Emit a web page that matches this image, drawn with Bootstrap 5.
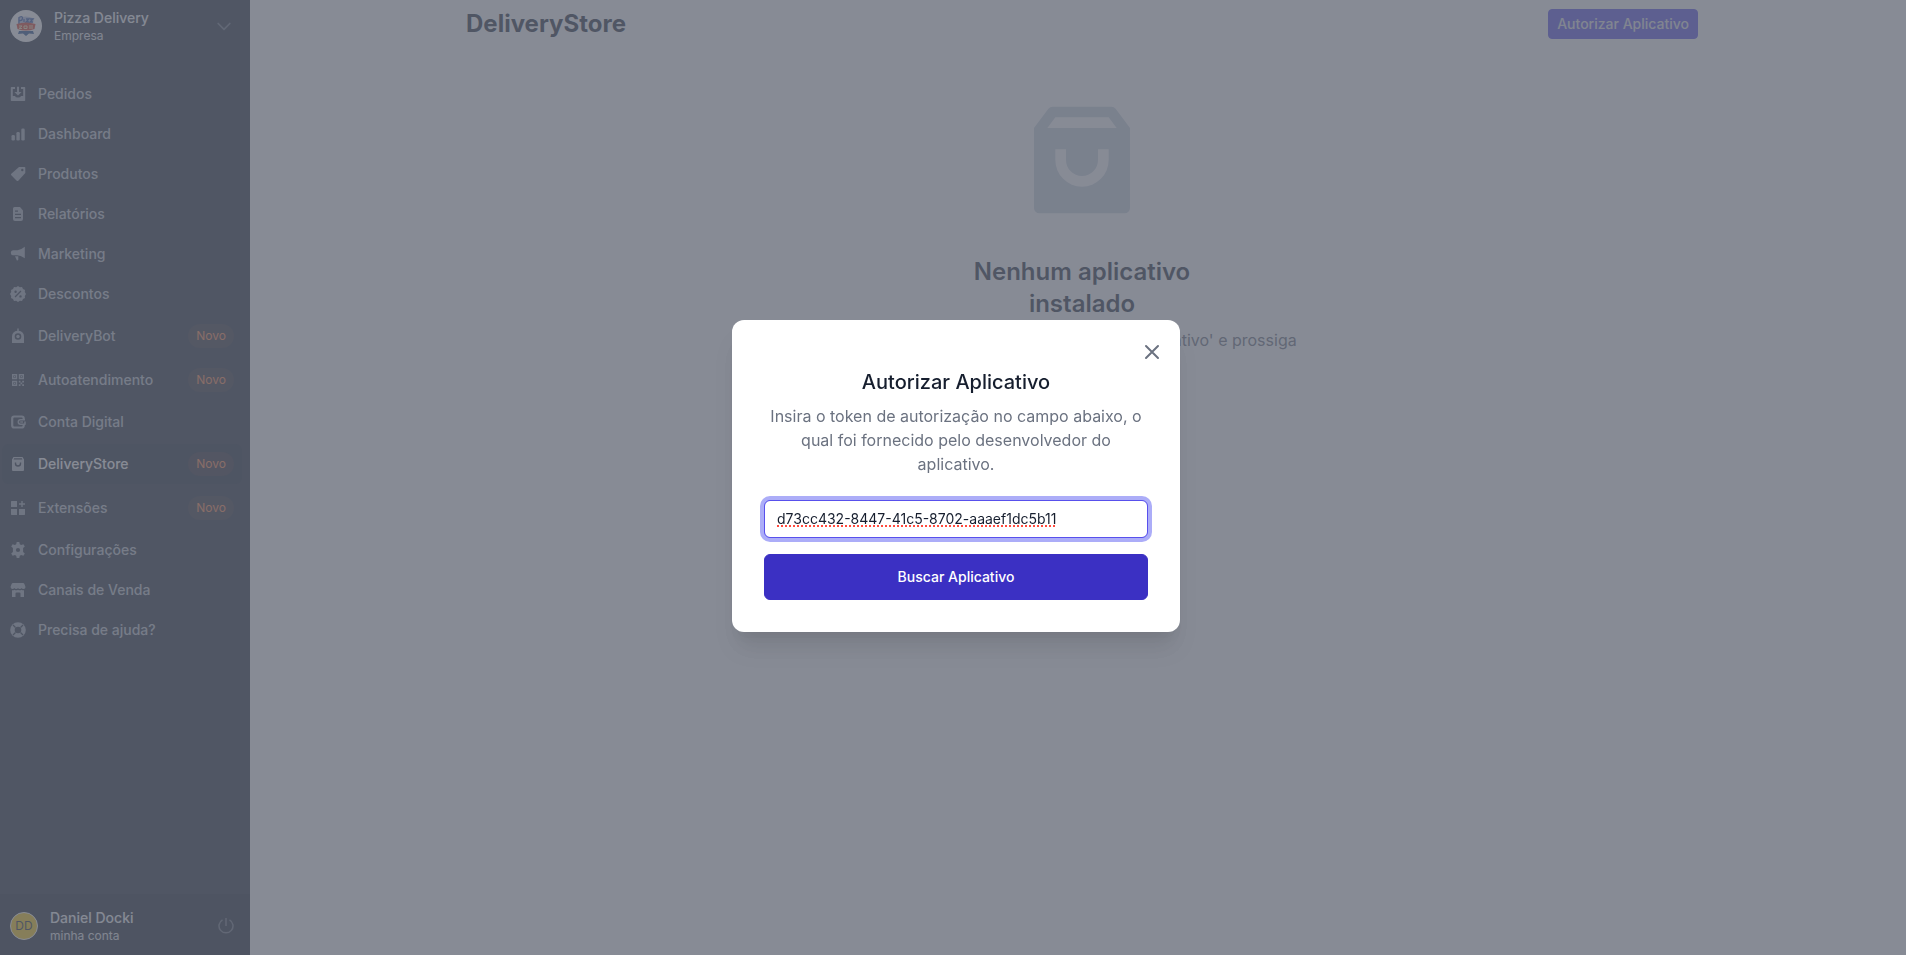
<!DOCTYPE html>
<html lang="pt-BR">
<head>
<meta charset="utf-8">
<meta name="viewport" content="width=device-width, initial-scale=1">
<title>DeliveryStore</title>
<link href="https://cdn.jsdelivr.net/npm/bootstrap@5.3.0/dist/css/bootstrap.min.css" rel="stylesheet">
<style>
  body { font-family: Inter, "Liberation Sans", sans-serif; font-size: 14px; line-height: 20px; color: #252f3f; background: #fff; }
  .sidebar { width: 250px; background: #252f3f; }
  .side-head { padding: 8px 16px 0 10px; margin-bottom: 32px; }
  .brand-logo { width: 32px; height: 32px; }
  .side-name { font-weight: 500; line-height: 20px; color: #f4f5f7; }
  .side-sub { font-size: 12px; line-height: 16px; color: #e5e7eb; }
  .side-nav { padding: 0 8px 0 2px; gap: 4px; }
  .side-nav .nav-link { display: flex; align-items: center; gap: 12px; padding: 8px; border-radius: 6px; color: #bec3cc; font-weight: 500; line-height: 20px; }
  .side-nav .nav-link svg { width: 16px; height: 16px; color: #9fa6b2; flex: none; }
  .side-nav .nav-link.active { background: #1f2838; color: #fff; }
  .side-nav .nav-link.active svg { color: #b4bac4; }
  .tag-new { margin-left: auto; padding: 4px 8px; border-radius: 12px; font-size: 12px; line-height: 16px; font-weight: 400; color: #ff8a4c; background: rgba(255, 120, 60, .08); }
  .side-foot { padding: 14px 16px 11px 10px; background: #1f2737; }
  .user-dot { width: 28px; height: 28px; border: 1px solid #fff; background: #faca15; font-size: 12px; color: #252f3f; }
  .icon-btn { border: 0; background: none; padding: 0; line-height: 0; color: #6b7280; }
  .page-wrap { max-width: 1288px; padding: 8px 24px 8px 32px; }
  .page-title { font-size: 24px; line-height: 32px; font-weight: 700; }
  .btn-authorize { --bs-btn-color: #e5e7eb; --bs-btn-bg: #5850ec; --bs-btn-border-color: #5850ec; font-size: 14px; line-height: 20px; font-weight: 500; padding: 4px 8px; border-radius: 4px; }
  .empty-box { padding-top: 56px; }
  .empty-box svg { color: #cbd5e0; }
  .empty-box h2 { max-width: 256px; font-size: 24px; line-height: 32px; font-weight: 600; }
  .empty-box p { max-width: 448px; font-size: 16px; line-height: 24px; color: #6b7280; }
  .modal-backdrop.dim { --bs-backdrop-bg: #5f6471; --bs-backdrop-opacity: .75; opacity: .75; }
  .modal.auth { padding: 0 0 4px 6px; --bs-modal-width: 448px; }
  .modal.auth .modal-content { border: 0; border-radius: 12px; padding: 48px 32px 32px; box-shadow: 0 20px 25px -5px rgba(0,0,0,.1), 0 10px 10px -5px rgba(0,0,0,.04); }
  .icon-btn.close-x { position: absolute; top: 20px; right: 16px; }
  .modal.auth h1 { font-size: 20px; line-height: 28px; font-weight: 500; color: #161e2e; }
  .modal.auth p { font-size: 16px; line-height: 24px; color: #6b7280; }
  .token-input.form-control { font-size: 14px; line-height: 20px; padding: 8px 12px; border-radius: 6px; color: #161e2e; border-color: #5850ec; box-shadow: 0 0 0 4px #acadf8; text-decoration: underline dotted #ff4b3e 2px; text-underline-offset: 2px; text-decoration-skip-ink: none; }
  .btn-search { --bs-btn-color: #fff; --bs-btn-bg: #3b30c3; --bs-btn-border-color: #3b30c3; font-size: 14px; line-height: 20px; font-weight: 500; padding: 12px; border-radius: 6px; }
</style>
<script src="https://cdn.jsdelivr.net/npm/bootstrap@5.3.0/dist/js/bootstrap.bundle.min.js"></script>
</head>
<body>
<div class="d-flex min-vh-100">
  <aside class="sidebar d-flex flex-column flex-shrink-0">
    <div class="side-head d-flex align-items-center">
      <svg class="brand-logo flex-shrink-0" viewBox="0 0 32 32" aria-hidden="true">
        <circle cx="16" cy="16" r="16" fill="#fff"/>
        <path d="M8 8.500q7-4 16 0l-1 5H8z" fill="#b8c4e8"/>
        <path d="M9 14V7.500q4-2 3.500 1-.5 2.500-3 2M14 12V9m2 0h3l-3 3h3m1-3h3l-3 3h3" fill="none" stroke="#3458a8" stroke-width="1.300"/>
        <path d="M6.500 14q9.500-3 19 0l-1 5q-8.500 3-17 0z" fill="#e0402e"/>
        <path d="M9 16h3l-3 2.500h3m2-2.500h3v2.500h-3zm5 0h4m-4 2h4" fill="none" stroke="#fce6b0" stroke-width="1"/>
        <path d="M9 21h14l1 3-5-.5-3 2.500-3-2.500-5 .5z" fill="#27518f"/>
      </svg>
      <div class="ms-2 ps-1">
        <div class="side-name">Pizza Delivery</div>
        <div class="side-sub">Empresa</div>
      </div>
      <button class="icon-btn ms-auto" type="button" aria-label="Trocar empresa">
        <svg width="20" height="20" viewBox="0 0 24 24" fill="none" stroke="currentColor" stroke-width="2" stroke-linecap="round" stroke-linejoin="round"><path d="M5 9l7 7 7-7"/></svg>
      </button>
    </div>

    <nav class="side-nav nav flex-column">
      <a class="nav-link" href="#"><svg viewBox="0 0 16 16" fill="currentColor"><path d="M1.500 1H5v2H2.800v7H5q.4 1.600 3 1.600T11 10h2.200V3H11V1h3.500q.7 0 .7.700v12.600q0 .7-.7.700h-13q-.7 0-.7-.7V1.700q0-.7.700-.7zM7 .8h2V6h2.600L8 9.600 4.400 6H7z"/></svg>Pedidos</a>
      <a class="nav-link" href="#"><svg viewBox="0 0 16 16" fill="currentColor"><rect x="1.500" y="9" width="3.400" height="5.500" rx="1.300"/><rect x="6.400" y="6" width="3.400" height="8.500" rx="1.300"/><rect x="11.300" y="2.500" width="3.400" height="12" rx="1.300"/></svg>Dashboard</a>
      <a class="nav-link" href="#"><svg viewBox="0 0 16 16" fill="currentColor"><path fill-rule="evenodd" d="M9 1h5.500q.8 0 .8.800V7L8.300 14.700q-.8.800-1.600 0L1.300 9.300q-.8-.8 0-1.600zm3.300 1.800a1.200 1.200 0 1 0 0 2.400 1.200 1.200 0 0 0 0-2.400z"/></svg>Produtos</a>
      <a class="nav-link" href="#"><svg viewBox="0 0 16 16" fill="currentColor"><path fill-rule="evenodd" d="M4.500 1H10l3 3.500V13q0 2-2 2H5q-2 0-2-2V2.500Q3 1 4.500 1zM5 4.500v1.200h3V4.500zm0 3.300V9h6V7.800zm0 3.200v1.200h6V11z"/></svg>Relatórios</a>
      <a class="nav-link" href="#"><svg viewBox="0 0 16 16" fill="currentColor"><path d="M14.800.8v11.400Q10.500 9.300 7 9.300H3Q.8 9.300.8 6.800T3 4.300h4.500q3.500-.3 7.300-3.500zM5 10.300h3.300v3.500L7 14.800z"/></svg>Marketing</a>
      <a class="nav-link" href="#"><svg viewBox="0 0 16 16" fill="currentColor"><path fill-rule="evenodd" d="m8 0 1.800 1.200 2.200-.3 1 2 2 1-.2 2.200L16 8l-1.200 1.900.2 2.200-2 1-1 2-2.200-.3L8 16l-1.800-1.200-2.200.3-1-2-2-1 .2-2.200L0 8l1.200-1.900L1 3.900l2-1 1-2 2.200.3zM5.600 4.500a1.200 1.200 0 1 0 0 2.400 1.200 1.200 0 0 0 0-2.400zm4.900.1-5.900 6 .9.900 5.900-6zm0 4.600a1.200 1.200 0 1 0 0 2.400 1.200 1.200 0 0 0 0-2.400z"/></svg>Descontos</a>
      <a class="nav-link" href="#"><svg viewBox="0 0 16 16" fill="currentColor"><path fill-rule="evenodd" d="M7.300.5h1.400v2.200A5.800 5.800 0 0 1 14 8.500V15H2V8.500a5.800 5.800 0 0 1 5.300-5.800zM8 5.200a3.300 3.300 0 1 0 0 6.600 3.300 3.300 0 0 0 0-6.600z"/><circle cx="8" cy="8.500" r="1.700"/></svg>DeliveryBot<span class="tag-new">Novo</span></a>
      <a class="nav-link" href="#"><svg viewBox="0 0 16 16" fill="currentColor"><path fill-rule="evenodd" d="M2 2h5.200v5.200H2zm1.400 1.400v2.400h2.400V3.400zM8.800 2H14v5.200H8.800zm1.400 1.400v2.400h2.400V3.400zM2 8.800h5.200V14H2zm1.400 1.400v2.400h2.400v-2.400zM4 4h1.200v1.200H4zM10.800 4H12v1.200h-1.200zM4 10.800h1.200V12H4zM8.800 8.800h1.700v1.700h1.700V8.800H14v1.700h-1.800v1.700H14V14h-1.800v-1.800h-1.700V14H8.800v-1.800h1.700v-1.700H8.800z"/></svg>Autoatendimento<span class="tag-new">Novo</span></a>
      <a class="nav-link" href="#"><svg viewBox="0 0 16 16" fill="none" stroke="currentColor" stroke-width="2.200" stroke-linejoin="round"><path d="M13.700 5V4.500q0-2-2-2H4.200q-2 0-2 2v7q0 2 2 2h7.500q2 0 2-2V11"/><path d="M15 5.800h-4.500a2.200 2.200 0 0 0 0 4.400H15V7.500" stroke-width="1.500"/><path d="M10.200 8H13" stroke-width="1.300"/></svg>Conta Digital</a>
      <a class="nav-link active" href="#" aria-current="page"><svg viewBox="0 0 16 16" fill="currentColor"><path fill-rule="evenodd" d="M3.500 1h9L14 3.500V14q0 1-1 1H3q-1 0-1-1V3.500zm.7 1.300-.6 1.100h8.800l-.6-1.100zM4.800 6.500v1a3.200 3.200 0 0 0 6.400 0v-1H9.800v1a1.800 1.800 0 0 1-3.600 0v-1z"/></svg>DeliveryStore<span class="tag-new">Novo</span></a>
      <a class="nav-link" href="#"><svg viewBox="0 0 16 16" fill="currentColor"><path d="M1.500 1H7v6H1V1.500zM1 9h6v6H1.500L1 14.500zM9 9h6v5.500l-.5.500H9zM11.300 1h1.400v2.300H15v1.400h-2.300V7h-1.400V4.700H9V3.300h2.300z"/></svg>Extensões<span class="tag-new">Novo</span></a>
      <a class="nav-link" href="#"><svg viewBox="0 0 16 16" fill="currentColor"><path fill-rule="evenodd" d="M6.700 0h2.600l.5 2.300 1.300.8 2.300-.9 1.400 2.300L13.100 6v4l1.700 1.500-1.400 2.300-2.300-.9-1.300.8-.5 2.300H6.700l-.5-2.300-1.300-.8-2.300.9-1.400-2.300L2.900 10V6L1.200 4.500l1.400-2.300 2.300.9 1.300-.8zM8 5.900a2.100 2.100 0 1 0 0 4.200 2.100 2.100 0 0 0 0-4.200z"/></svg>Configurações</a>
      <a class="nav-link" href="#"><svg viewBox="0 0 16 16" fill="currentColor"><path d="M3 1h10q1 0 1.400 1L15.500 5q0 2-1.900 2T11.700 6q-.5 1-1.900 1T8 6Q7.500 7 6.200 7T4.300 6q-.5 1-1.900 1T.5 5l1.100-3Q2 1 3 1zM2 8.200q1.500.2 2.400-.5 1.700 1 3.600 0 1.900 1 3.600 0 1 .7 2.400.5V15h-3.500v-3.500q0-1-1-1h-3q-1 0-1 1V15H2z"/></svg>Canais de Venda</a>
      <a class="nav-link" href="#"><svg viewBox="0 0 16 16"><circle cx="8" cy="8" r="7.800" fill="currentColor"/><path d="M3 3l2.500 2.500M13 3l-2.500 2.500M3 13l2.500-2.500M13 13l-2.500-2.500" stroke="#252f3f" stroke-width="1.300" fill="none"/><circle cx="8" cy="8" r="3.300" fill="#252f3f"/></svg>Precisa de ajuda?</a>
    </nav>

    <div class="side-foot d-flex align-items-center mt-auto">
      <div class="user-dot rounded-circle d-flex align-items-center justify-content-center flex-shrink-0">DD</div>
      <div class="ms-2 ps-1">
        <div class="side-name">Daniel Docki</div>
        <div class="side-sub">minha conta</div>
      </div>
      <button class="icon-btn ms-auto" type="button" aria-label="Sair">
        <svg width="16" height="16" viewBox="0 0 16 16" fill="none" stroke="currentColor" stroke-width="1.500"><path d="M8 0v8M4.500 1.800a7 7 0 1 0 7 0"/></svg>
      </button>
    </div>
  </aside>

  <main class="flex-grow-1">
    <div class="page-wrap mx-auto">
      <header class="d-flex align-items-center justify-content-between">
        <h1 class="page-title mb-0">DeliveryStore</h1>
        <button class="btn btn-authorize" type="button">Autorizar Aplicativo</button>
      </header>
      <section class="empty-box d-flex flex-column align-items-center text-center">
        <svg width="128" height="128" viewBox="0 0 24 24" fill="currentColor" aria-hidden="true"><path d="M6.500 2h11a1 1 0 0 1 .8.400L21 6v15a1 1 0 0 1-1 1H4a1 1 0 0 1-1-1V6l2.700-3.600a1 1 0 0 1 .8-.4zm12 4L17 4H7L5.500 6h13zM9 10H7v2a5 5 0 0 0 10 0v-2h-2v2a3 3 0 0 1-6 0v-2z"/></svg>
        <h2 class="mt-4 pt-2 mb-2">Nenhum aplicativo instalado</h2>
        <p class="mb-0">Pressione o botão acima 'Autorizar Aplicativo' e prossiga com a instalação.</p>
      </section>
    </div>
  </main>
</div>

<div class="modal-backdrop dim"></div>
<div class="modal auth d-block" role="dialog" aria-modal="true" aria-labelledby="authTitle">
  <div class="modal-dialog modal-dialog-centered">
    <form class="modal-content text-center">
      <button class="icon-btn close-x" type="button" aria-label="Fechar">
        <svg width="24" height="24" viewBox="0 0 24 24" fill="none" stroke="currentColor" stroke-width="2" stroke-linecap="round"><path d="M6 6l12 12M18 6 6 18"/></svg>
      </button>
      <h1 class="mb-2" id="authTitle">Autorizar Aplicativo</h1>
      <p class="mb-4">Insira o token de autorização no campo abaixo, o qual foi fornecido pelo desenvolvedor do aplicativo.</p>
      <input class="form-control token-input mb-3" type="text" aria-label="Token de autorização" value="d73cc432-8447-41c5-8702-aaaef1dc5b11">
      <button class="btn btn-search w-100" type="button">Buscar Aplicativo</button>
    </form>
  </div>
</div>
</body>
</html>
